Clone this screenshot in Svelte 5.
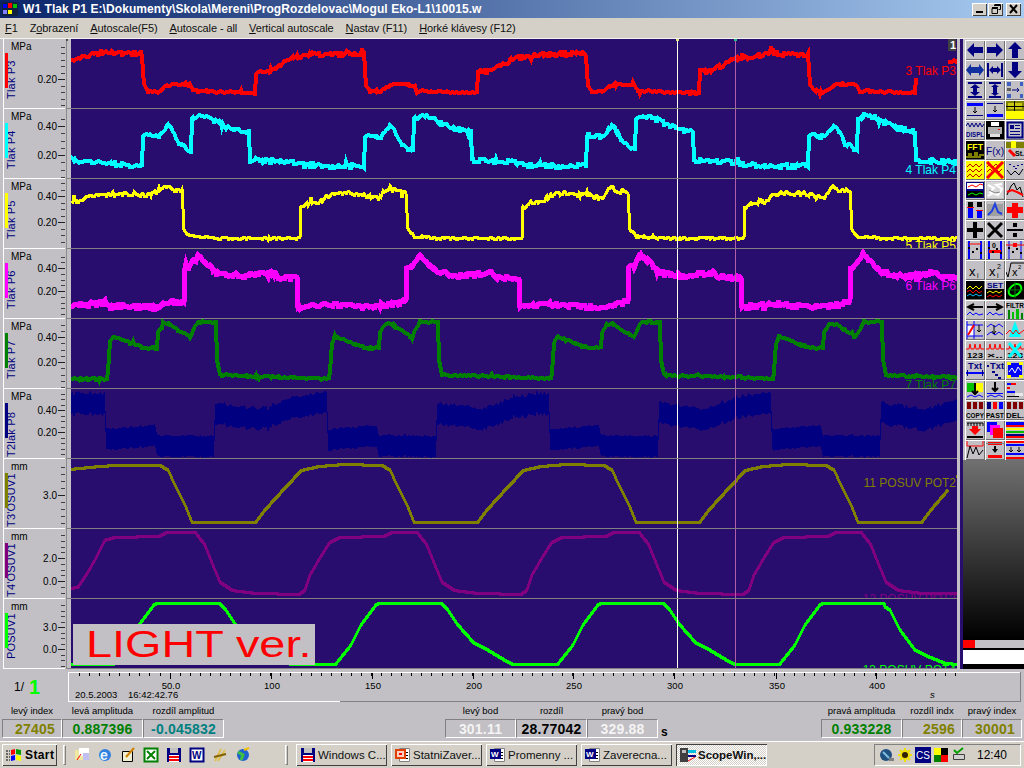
<script>
    // scope channels: anchors are absolute pixels of the plot, one cycle repeats every 222px
    const N = "#000080";
    const B = "#0000ff";
    const R = "#ff0000";
    const Y = "#ffff00";
    const K = "#000000";
    const G = "#008000";
    const O = "#808000";

    const channels = [
        { title: "Tlak P3", unit: "MPa", color: "#ff0000", width: 4, name: "3 Tlak P3", nameY: 71, top: 39,
          marks: [["0.20", 79]], step: 6.5,
          lead: [[71, 60], [100, 53], [142, 54], [144, 85], [148, 91], [158, 92], [165, 87], [172, 84], [190, 85], [194, 91], [254, 93]],
          t0: 255, cycles: 3, end: 916, noise: [2, 1], split: 76,
          cycle: [[0, 93], [1, 72], [15, 70], [38, 58], [70, 54], [109, 54], [111, 85], [115, 91], [125, 92], [132, 87], [139, 84], [157, 85], [161, 91], [221, 93]],
          tail: [[915, 93], [916, 78], [917, 78]], extra: "948,62 952,62 954,60 958,63" },
        { title: "Tlak P4", unit: "MPa", color: "#00ffff", width: 4, name: "4 Tlak P4", nameY: 170, top: 109,
          marks: [["0.40", 126], ["0.20", 155]], step: 7.25,
          lead: [[71, 160], [100, 163], [141, 166]],
          t0: 142, cycles: 4, end: 958, noise: [2, 2], split: 140,
          cycle: [[0, 166], [1, 135], [17, 137], [26, 125], [30, 130], [37, 143], [49, 151], [50, 120], [57, 115], [67, 118], [82, 125], [92, 129], [107, 131], [108, 160], [147, 162], [162, 165], [192, 166], [221, 166]] },
        { title: "Tlak P5", unit: "MPa", color: "#ffff00", width: 3, name: "5 Tlak P5", nameY: 246, top: 179,
          marks: [["0.40", 196], ["0.20", 222]], step: 6.5,
          lead: [[71, 203], [90, 197], [120, 193], [150, 195], [158, 190], [165, 187], [182, 191], [184, 230], [190, 236], [215, 238], [299, 238]],
          t0: 300, cycles: 3, end: 958, noise: [2, 1], split: 215,
          cycle: [[0, 238], [1, 207], [9, 203], [19, 202], [29, 195], [39, 193], [59, 193], [74, 197], [81, 198], [84, 192], [89, 187], [94, 190], [106, 192], [108, 230], [114, 236], [139, 238], [221, 238]] },
        { title: "Tlak P6", unit: "MPa", color: "#ff00ff", width: 5, name: "6 Tlak P6", nameY: 286, top: 249,
          marks: [["0.40", 268], ["0.20", 291]], step: 5.75,
          lead: [[71, 306], [105, 303], [110, 306], [160, 307], [165, 302], [183, 301]],
          t0: 184, cycles: 4, end: 958, noise: [2, 2], split: 999,
          cycle: [[0, 302], [1, 268], [6, 266], [13, 255], [21, 262], [31, 272], [56, 276], [86, 272], [91, 277], [113, 278], [114, 308], [116, 306], [150, 304], [190, 307], [215, 303], [221, 301]] },
        { title: "Tlak P7", unit: "MPa", color: "#008000", width: 4, name: "7 Tlak P7", nameY: 385, top: 319,
          marks: [["0.40", 337], ["0.20", 362]], step: 6.25,
          lead: [[71, 379], [107, 379]],
          t0: 108, cycles: 4, end: 958, noise: [1, 1], split: 999,
          cycle: [[0, 372], [2, 343], [5, 336], [27, 345], [37, 348], [49, 348], [50, 333], [55, 324], [62, 324], [72, 331], [82, 337], [87, 327], [90, 322], [108, 322], [109, 360], [112, 375], [132, 376], [182, 377], [221, 379]] },
        { title: "T2lak P8", unit: "MPa", color: "#000080", band: 11, name: "8 Tlak P8", nameY: 414, top: 389,
          marks: [["0.40", 410], ["0.20", 432]], step: 5.5,
          lead: [[71, 404], [105, 404], [106, 440], [155, 436], [157, 446], [213, 447]],
          t0: 214, cycles: 4, end: 958, noise: [2, 1], split: 430,
          cycle: [[0, 447], [1, 414], [46, 420], [78, 408], [106, 404], [113, 404], [114, 440], [163, 436], [165, 446], [221, 447]] },
        { title: "T3'OSUV1", unit: "mm", color: "#808000", width: 3, name: "11 POSUV POT2", nameY: 483, top: 459,
          marks: [["3.0", 495]], step: 7,
          lead: [[71, 469], [100, 466], [116, 465], [159, 465]],
          t0: 160, cycles: 4, end: 948, noise: [0, 0], split: 999,
          cycle: [[0, 465], [8, 470], [15, 485], [25, 505], [32, 522], [96, 522], [105, 510], [125, 488], [142, 470], [160, 466], [185, 464], [221, 465]],
          tail: [[948, 490]], extra: "956,476 958,476" },
        { title: "T4'OSUV1", unit: "mm", color: "#800080", width: 3, name: "12 POSUV POT3", nameY: 599, top: 529,
          marks: [["2.0", 558], ["0.0", 581]], step: 5.75,
          lead: [[71, 588], [78, 587], [85, 577], [95, 560], [105, 540], [115, 537], [160, 536], [167, 532], [194, 532]],
          t0: 195, cycles: 4, end: 958, noise: [0, 0], split: 999,
          cycle: [[0, 532], [10, 545], [20, 570], [25, 582], [37, 590], [60, 593], [105, 594], [110, 590], [115, 575], [125, 558], [135, 542], [145, 537], [190, 536], [197, 532], [221, 532]] },
        { title: "POSUV1", unit: "mm", color: "#00ff00", width: 3, name: "13 POSUV POT4", nameY: 670, top: 599,
          marks: [["3.0", 627], ["0.0", 649]], step: 5.5,
          lead: [[71, 664], [114, 664], [129, 645], [139, 625], [154, 605], [157, 603], [218, 603]],
          t0: 219, cycles: 3, end: 958, noise: [0, 0], split: 999,
          cycle: [[0, 603], [7, 610], [17, 625], [32, 642], [47, 650], [67, 662], [72, 664], [117, 664], [132, 645], [142, 625], [157, 605], [160, 603], [221, 603]],
          tail: [[880, 603], [890, 610], [900, 630], [915, 650], [930, 657], [945, 663], [958, 664]] }
    ];

    function random(seed) {
        return () => {
            seed = (seed + 0x6d2b79f5) | 0;
            let t = Math.imul(seed ^ (seed >>> 15), 1 | seed);
            t = (t + Math.imul(t ^ (t >>> 7), 61 | t)) ^ t;
            return ((t ^ (t >>> 14)) >>> 0) / 4294967296;
        };
    }

    function anchorsOf(ch) {
        let list = [...ch.lead];
        for (let k = 0; k < ch.cycles; k++) {
            const from = ch.t0 + k * 222;
            for (const [dx, y] of ch.cycle) {
                if (from + dx <= ch.end) list.push([from + dx, y]);
            }
        }
        if (ch.tail) list.push(...ch.tail);
        // hold the last level up to the end of the trace
        list.push([ch.end + 2, list[list.length - 1][1]]);
        return list;
    }

    function samples(ch, seed) {
        const rand = random(seed);
        const a = anchorsOf(ch);
        const out = [];
        let i = 0, jitter = 0;
        for (let x = 71; x <= ch.end; x++) {
            while (i < a.length - 2 && a[i + 1][0] < x) i++;
            const [x0, y0] = a[i];
            const [x1, y1] = a[i + 1];
            const y = y0 + ((y1 - y0) * (x - x0)) / Math.max(1, x1 - x0);
            const amp = y < ch.split ? ch.noise[0] : ch.noise[1];
            if (x % 2 === 0) jitter = (rand() - 0.5) * 2 * amp;
            const spike = rand() < 0.03 ? (rand() - 0.5) * 6 * amp : 0;
            out.push([x, Math.round(y + jitter + spike)]);
        }
        return out;
    }

    function tracePoints(ch, seed) {
        return samples(ch, seed).map(([x, y]) => x + "," + y).join(" ");
    }

    // thick navy channel is a filled band rather than a line
    function bandPoints(ch, seed) {
        const s = samples(ch, seed);
        const top = s.map(([x, y]) => x + "," + (y - ch.band));
        const low = s.reverse().map(([x, y]) => x + "," + (y + ch.band - 1));
        return top.concat(low).join(" ");
    }

    function ticks(ch) {
        const list = [];
        const first = ch.marks[0][1] - ch.top;
        for (let y = first - ch.step * 8; y < 70; y += ch.step) {
            if (y > 3 && y < 69) list.push(Math.round(y));
        }
        return list;
    }

    const rulerMinor = [];
    for (let x = 79; x < 958; x += 10.07) rulerMinor.push(Math.round(x));
    const rulerMajor = [
        ["50.0", 170], ["100", 271], ["150", 372], ["200", 473], ["250", 573], ["300", 674], ["350", 776], ["400", 876]
    ];

    const r = (x, y, w, h, f) => `<rect x="${x}" y="${y}" width="${w}" height="${h}" fill="${f}"/>`;
    const p = (d, f = N) => `<path d="${d}" fill="${f}"/>`;
    const s = (d, c = N, w = 1) => `<path d="${d}" fill="none" stroke="${c}" stroke-width="${w}"/>`;
    const t = (x, y, size, str, f = N, w = "bold", fit = 0) =>
        `<text x="${x}" y="${y}" font-size="${size}" fill="${f}" font-weight="${w}"${fit ? ` textLength="${fit}" lengthAdjust="spacingAndGlyphs"` : ""}>${str}</text>`;
    const zig = "M1 8 4 5 7 8 10 5 13 8 16 5";
    const dots = r(2, 6, 2, 2, K) + r(6, 10, 2, 2, K) + r(10, 7, 2, 2, K) + r(14, 11, 2, 2, K);
    const digits = t(1, 17, 8, "123", K, "bold", 16);
    const peaks = s("M0 8H3L4 3 5 8H8L9 3 10 8H13L14 3 15 8H18", R);

    const tools = [
        p("M1 9 8 2V6H17V12H8V16Z"), p("M17 9 10 2V6H1V12H10V16Z"), p("M9 1 16 8H12V17H6V8H2Z"),
        p("M0 9 5 3V6H13V3L18 9 13 15V12H5V15Z", "#1030a0"), r(1, 2, 2, 14, N) + r(15, 2, 2, 14, N) + p("M3 9 7 5V7H11V5L15 9 11 13V11H7V13Z"), p("M9 17 16 10H12V1H6V10H2Z"),
        r(2, 1, 14, 2, N) + r(2, 15, 14, 2, N) + p("M9 3 14 7H11V11H14L9 15 4 11H7V7H4Z"), r(3, 1, 12, 2, N) + r(3, 15, 12, 2, N) + p("M9 3 13 6H11V12H13L9 15 5 12H7V6H5Z"), r(1, 1, 4, 4, "#4060c0") + r(1, 7, 4, 3, "#606060") + r(1, 13, 4, 4, "#4060c0") + r(14, 1, 3, 4, "#4060c0") + r(14, 13, 3, 4, "#4060c0") + s("M6 9H13M11 7 13 9 11 11", N, 1),
        r(1, 2, 16, 3, B) + r(1, 14, 16, 1, N) + s("M9 6V12M7 10 9 12 11 10", K), r(1, 2, 16, 1, N) + r(1, 13, 16, 3, B) + s("M9 5V11M7 9 9 11 11 9", K), r(0, 0, 18, 10, O) + r(2, 2, 14, 6, "#c8c810") + r(8, 0, 1, 10, K) + r(0, 5, 18, 1, K) + r(0, 10, 18, 8, Y),
        s("M0 5 2 2 4 6 6 2 8 6 10 2 12 6 14 2 16 6 18 3") + t(0, 16, 7.5, "DISPL", N, "bold", 18), r(0, 0, 18, 18, K) + p("M5 1H13V5H5Z", "#fff") + r(2, 6, 14, 7, "#b0b0b0") + r(4, 13, 10, 3, "#e0e0e0") + r(12, 8, 2, 1, R), s("M1.5 1.5H16.5V16.5H1.5Z", N, 2) + r(4, 4, 4, 4, N) + r(9, 4, 5, 1, N) + r(9, 7, 5, 1, N) + r(4, 10, 10, 1, N) + r(4, 13, 10, 1, N),
        r(0, 0, 18, 18, K) + t(1, 9, 9, "FFT", Y, "bold", 16) + s("M0 16H3V13H5V16H9V12H11V16H14V14H18", O, 2), t(0, 14, 11, "F(x)", N, "normal", 18), r(0, 1, 18, 6, O) + r(5, 0, 5, 7, Y) + s("M3 9 9 15", R, 3) + t(9, 15, 7, "St.", K),
        r(0, 0, 18, 18, Y) + s("M1 6 4 3 7 6 10 3 13 6 16 3", "#c00000") + s("M1 11 4 8 7 11 10 8 13 11 16 8", "#c00000") + s("M1 16 4 13 7 16 10 13 13 16 16 13", "#c00000"), r(0, 0, 18, 18, Y) + s("M1 6 4 3 7 6 10 3 13 6 16 3", "#c00000") + s("M1 11 4 8 7 11 10 8 13 11 16 8", "#c00000") + s("M1 1 17 17M17 1 1 17", R, 3), s("M1 9 5 14 9 10 13 14 17 8", K) + r(3, 3, 2, 1, N) + r(7, 5, 2, 1, N) + r(11, 4, 2, 1, N) + r(15, 3, 2, 1, N) + r(9, 7, 2, 1, N),
        r(0, 1, 18, 16, N) + r(1, 2, 16, 6, "#fff") + r(1, 10, 16, 6, K) + s("M2 6 6 4 10 6 14 3 17 4", R) + s("M2 14 6 12 10 14 14 12 17 13", "#00ff00"), r(1, 1, 16, 16, "#d8d8d8") + s("M2 4 8 7 4 11 12 14 16 8 10 4 16 3M2 15 7 12", "#ffffff", 2) + s("M3 9 9 12 14 11", "#808080"), s("M1 14 5 5 8 2 11 9 14 6 17 16", K) + s("M1 11 6 9 11 11 17 14", R, 2),
        r(2, 1, 5, 5, K) + r(11, 1, 5, 5, K) + r(2, 6, 5, 11, B) + r(11, 9, 5, 8, B) + r(1, 6, 7, 1, R) + r(10, 9, 7, 1, R), r(1, 3, 16, 12, "#a0a0a0") + s("M2 14 6 10 9 3 12 11 16 13", "#2040e0", 2), p("M6 2H12V6H17V12H12V17H6V12H1V6H6Z", R),
        p("M7 1H11V7H17V11H11V17H7V11H1V7H7Z", K), s("M2 2 16 16M16 2 2 16", K, 3), r(1, 8, 16, 2, K) + r(7, 2, 4, 4, K) + r(7, 12, 4, 4, K),

        s("M3 0V18M15 0V18", B, 2) + s("M3 3H15", R) + dots, s("M3 0V18M15 0V18", B, 2) + t(6, 7, 7, "0", K) + r(3, 9, 12, 3, R) + dots, s("M3 0V18M15 0V18", B) + s("M0 4H18", R) + r(7, 2, 4, 4, R) + dots,
        t(3, 15, 13, "x", K, "normal") + t(11, 17, 7, "i", K, "normal"), t(3, 15, 13, "x", K, "normal") + t(11, 8, 7, "2", K, "normal") + t(11, 17, 7, "i", K, "normal"), s("M0 11 2 16 5 2H18", K) + t(6, 15, 11, "x", K, "normal") + t(12, 8, 6, "2", K, "normal"),
        r(0, 0, 18, 18, K) + s(zig, Y) + s("M1 11 4 9 7 12 10 9 13 12 16 10", R) + s("M1 15 4 13 7 15 10 13 13 15 16 14", "#00c0ff"), t(1, 7, 8, "SET", N, "bold", 16) + r(0, 8, 18, 10, K) + s("M1 12 4 10 7 12 10 10 13 12 16 10", Y) + s("M1 16 4 14 7 16 10 14 13 16 16 14", R), r(0, 0, 18, 18, K) + `<ellipse cx="9" cy="9" rx="7" ry="5" transform="rotate(-40 9 9)" fill="none" stroke="#00ff00" stroke-width="2"/>` + s("M9 1V17M1 9H17", "#008000"),
        s("M8 3 2 6 8 9M2 6H17", K, 2) + s("M1 14 4 11 7 14 10 12 13 14 17 13", B), s("M10 3 16 6 10 9M1 6H16", K, 2) + s("M1 14 4 11 7 14 10 12 13 14 17 13", B), t(0, 7, 7, "FILTR", K, "bold", 18) + r(2, 9, 2, 9, G) + r(6, 11, 2, 7, "#00c000") + r(10, 8, 3, 10, "#00c000") + r(15, 12, 2, 6, G),
        r(1, 4, 7, 11, "#fff") + s("M1 0V18M1 4H17M8 0V18M1 15H17", B) + s("M2 14 8 4", R, 2) + s("M13 4V11M11 9 13 11 15 9", K), s("M1 6 5 3 9 6 13 3 17 6", B) + s("M1 14 5 11 9 14 13 11 17 14", B) + s("M8 4V13M6 10 8 13 10 10", K), p("M9 0 3 16H15Z", "#00ffff") + s("M0 13 4 9 7 13 10 9 13 13 18 9", R),
        peaks + digits, peaks + t(1, 17, 8, "×..", K, "bold", 16), peaks + digits + s("M3 2 15 16M15 2 3 16", "#00ffff", 3),
        t(2, 8, 8.5, "Txt", N, "bold", 14) + r(0, 11, 18, 2, B) + r(1, 9, 1, 6, N) + r(16, 9, 1, 6, N), t(4, 8, 8.5, "Txt", N, "bold", 14) + r(1, 4, 2, 2, N) + r(6, 10, 3, 2, N) + r(9, 13, 3, 2, N) + r(12, 16, 3, 2, N), r(2, 2, 14, 14, B) + r(1, 1, 4, 3, Y) + r(13, 1, 4, 3, Y) + r(1, 14, 4, 3, Y) + r(13, 14, 4, 3, Y) + s("M3 11 6 7 9 12 12 6 15 10", "#fff"),
        r(1, 2, 8, 9, "#00c000") + r(9, 2, 8, 9, Y) + s("M9 2V13M6 10 9 13 12 10", K, 2) + s("M1 16 5 14 9 16 13 14 17 16", B), s("M9 1V10M6 7 9 10 12 7", K, 2) + r(1, 12, 16, 1, B) + s("M1 16 5 14 9 16 13 14 17 16", B), r(1, 2, 4, 2, B) + r(5, 2, 5, 2, R) + r(1, 6, 3, 2, R) + r(1, 10, 8, 2, B) + r(1, 15, 12, 1, K) + r(9, 12, 8, 3, "#e8e8e8"),
        r(1, 1, 4, 7, "#800000") + r(7, 1, 4, 7, "#800000") + r(13, 1, 4, 7, "#800000") + t(0, 17, 7.5, "COPY", K, "bold", 18), r(1, 1, 4, 7, N) + r(7, 1, 4, 7, R) + r(13, 1, 4, 7, B) + t(0, 17, 7.5, "PAST", K, "bold", 18), r(1, 1, 4, 7, "#800000") + r(7, 1, 4, 7, "#800000") + r(13, 1, 4, 7, "#800000") + t(0, 17, 7.5, "DEL.", K, "bold", 18),
        s("M1 2H17M2 2V5M5 2V5M8 2V5M11 2V5M14 2V5M17 2V5", K) + p("M9 14 3 8H6V5H12V8H15Z", R) + s("M1 16H17", K, 2), r(1, 1, 10, 10, B) + r(4, 4, 10, 10, "#ff00ff") + r(7, 7, 10, 10, R), r(0, 1, 18, 3, B) + r(0, 4, 18, 2, R) + r(0, 7, 18, 2, Y) + r(0, 10, 18, 2, "#00c000") + r(0, 13, 18, 2, N) + r(0, 15, 18, 2, R),
        s("M1 0V5H17V0", R) + s("M1 17 4 5 7 13 10 6 13 14 17 9", K), r(2, 1, 14, 3, R) + r(0, 2, 18, 1, "#808080") + r(2, 14, 14, 3, R) + p("M9 12 6 8H12Z", K) + r(8, 5, 2, 3, K), r(0, 0, 18, 2, R) + r(0, 16, 18, 2, R) + r(0, 3, 18, 2, B) + r(0, 12, 18, 2, B) + s("M5 6V11M3 9 5 11 7 9M13 6V11M11 9 13 11 15 9", K, 1)
    ];

    const menu = [
        ["", "F", "1"], ["Z", "o", "brazení"], ["", "A", "utoscale(F5)"], ["", "A", "utoscale - all"],
        ["", "V", "ertical autoscale"], ["", "N", "astav (F11)"], ["", "H", "orké klávesy (F12)"]
    ];

    const leftStats = [
        { label: "levý index", value: "27405", tone: "olive", size: "narrow", end: true },
        { label: "levá amplituda", value: "0.887396", tone: "green", size: "wide" },
        { label: "rozdíl amplitud", value: "-0.045832", tone: "teal", size: "wide" }
    ];
    const midStats = [
        { label: "levý bod", value: "301.11", tone: "pale", size: "mid" },
        { label: "rozdíl", value: "28.77042", tone: "ink", size: "mid" },
        { label: "pravý bod", value: "329.88", tone: "pale", size: "mid" }
    ];
    const rightStats = [
        { label: "pravá amplituda", value: "0.933228", tone: "green", size: "wide" },
        { label: "rozdíl indx", value: "2596", tone: "olive", size: "narrow", end: true },
        { label: "pravý index", value: "30001", tone: "olive", size: "narrow", end: true }
    ];
    const statGroups = [
        { cls: "g-left", items: leftStats },
        { cls: "g-mid", items: midStats, suffix: "s" },
        { cls: "g-right", items: rightStats }
    ];

    const quick = [
        r(1, 3, 11, 10, "#f0e8a0") + r(5, 1, 10, 8, "#fff") + r(9, 6, 6, 7, "#c0c0f0") + s("M3 13 7 7", R),
        `<circle cx="8" cy="8" r="6" fill="#3080e0"/>` + t(3, 13, 14, "e", "#e8f4ff"),
        r(2, 4, 11, 11, "#f0f0d0") + s("M2.5 4.5H12.5V14.5H2.5Z", K) + s("M6 10 14 1", "#d08000", 2),
        r(1, 1, 14, 14, "#fff") + s("M1.5 1.5H14.5V14.5H1.5Z", G, 2) + s("M4 4 12 12M12 4 4 12", G, 2),
        r(1, 1, 14, 14, "#000080") + r(4, 1, 8, 5, "#c0c0c0") + r(3, 8, 10, 7, "#fff") + r(3, 9, 10, 2, R) + r(3, 12, 10, 2, R),
        r(1, 1, 14, 14, "#fff") + s("M1.5 1.5H14.5V14.5H1.5Z", N, 2) + t(3, 12, 10, "W", N),
        s("M3 14 9 2M6 14 13 3", "#e0c050", 2) + s("M2 10 14 7", "#806000", 2),
        `<circle cx="8" cy="8" r="6" fill="#2060d0"/>` + s("M3 5 8 8 6 13", "#40c040", 3) + s("M9 3 14 1", "#f0c000", 2)
    ];
    const floppy = r(1, 1, 14, 14, "#000080") + r(4, 1, 8, 5, "#c0c0c0") + r(3, 8, 10, 7, "#fff") + r(3, 9, 10, 2, R) + r(3, 12, 10, 2, R);
    const sheet = r(4, 1, 11, 14, "#fff") + s("M4.5 1.5H14.5V14.5H4.5Z", "#808080") + r(6, 5, 7, 1, K) + r(6, 8, 7, 1, K) + r(6, 11, 7, 1, K);
    const tasks = [
        { icon: floppy, text: "Windows C..." },
        { icon: sheet + r(0, 2, 11, 10, "#e04000") + r(2, 4, 7, 6, "#ffd0c0") + r(4, 6, 3, 2, R), text: "StatniZaver..." },
        { icon: sheet + r(0, 2, 11, 10, "#000080") + t(1, 10, 8, "W", "#fff"), text: "Promenny ..." },
        { icon: sheet + r(0, 2, 11, 10, "#000080") + t(1, 10, 8, "W", "#fff"), text: "Zaverecna..." },
        { icon: r(0, 1, 8, 14, "#404040") + r(2, 3, 4, 3, "#c0c0c0") + r(8, 3, 8, 3, "#00c0e0") + r(8, 8, 8, 2, N) + s("M8 14 15 10", R), text: "ScopeWin,...", active: true }
    ];
    const tray = [
        `<circle cx="7" cy="8" r="6" fill="#205080"/>` + s("M4 5 10 11", "#80c0e0", 2) + r(10, 11, 5, 3, "#808080"),
        `<circle cx="8" cy="8" r="5" fill="#f0e000"/>` + s("M8 1V15M1 8H15M3 3 13 13M13 3 3 13", "#f0e000", 2) + `<circle cx="8" cy="8" r="3" fill="#302000"/>` ,
        r(0, 0, 16, 16, "#000080") + t(1, 12, 10, "CS", "#fff", "normal"),
        r(1, 1, 7, 7, Y) + r(8, 1, 7, 7, K) + r(1, 8, 7, 7, "#008000") + r(8, 8, 7, 7, R),
        r(2, 7, 12, 6, "#d0d0d0") + s("M2.5 7.5H13.5V12.5H2.5Z", "#404040") + s("M3 3 6 6 12 1", "#00a000", 2)
    ];
</script>

<div class="app">
    <header class="titlebar">
        <svg class="appicon" width="16" height="14" viewBox="0 0 16 14">
            <rect width="16" height="14" fill="#102040" />
            <rect x="1" y="2" width="4" height="4" fill="#0000ff" />
            <rect x="6" y="1" width="4" height="5" fill="#ff0000" />
            <rect x="11" y="2" width="4" height="4" fill="#00c000" />
            <rect x="6" y="8" width="4" height="4" fill="#ffff00" />
            <rect x="1" y="8" width="4" height="4" fill="#8080ff" />
        </svg>
        <span class="caption">W1 Tlak P1 E:\Dokumenty\Skola\Mereni\ProgRozdelovac\Mogul Eko-L1\10015.w</span>
        <div class="winbtns">
            <button class="winbtn" aria-label="min"><svg width="14" height="12" viewBox="0 0 14 12"><rect x="3" y="8" width="7" height="2" fill="#000" /></svg></button>
            <button class="winbtn" aria-label="restore"><svg width="14" height="12" viewBox="0 0 14 12"><path d="M5.5 1.5H11.5V6.5H9.5M3 5.5H8.5V10.5H3Z M5 2.5H11M3 4.5H9" fill="none" stroke="#000" /></svg></button>
            <button class="winbtn close" aria-label="close"><svg width="14" height="12" viewBox="0 0 14 12"><path d="M3 2 10 10M10 2 3 10" fill="none" stroke="#000" stroke-width="2" /></svg></button>
        </div>
    </header>

    <nav class="menubar">
        {#each menu as [a, u, b]}
            <span class="menuitem">{a}<u>{u}</u>{b}</span>
        {/each}
    </nav>

    <main class="workspace">
        <section class="channels">
            {#each channels as ch, i}
                <div class="channel">
                    <svg class="side" width="71" height="70" viewBox="0 0 71 70">
                        <text class="title" transform="translate(15 {ch.title.length > 7 ? 68 : 60}) rotate(-90)">{ch.title}</text>
                        <rect x="0" y="0" width="11" height="14" fill="#c2c0c4" />
                        <rect x="3" y="0" width="1" height="70" fill="#ffffff" />
                        <rect x="5" y="14" width="3" height="35" fill={ch.color} />
                        <text class="unit" x="11" y="11">{ch.unit}</text>
                        {#each ticks(ch) as y}
                            <rect x="61" {y} width="4" height="1" fill="#404040" />
                        {/each}
                        {#each ch.marks as [label, y]}
                            <text class="mark" x="57" y={y - ch.top + 4}>{label}</text>
                            <rect x="58" y={y - ch.top} width="7" height="1" fill="#202020" />
                        {/each}
                        <rect x="3" y="69" width="62" height="1" fill="#ffffff" />
                        <rect x="66" y="0" width="1" height="70" fill="#8a8a8a" />
                        <rect x="67" y="69" width="4" height="1" fill="#808080" />
                        {#if i === 0}
                            <rect x="66" y="0" width="2" height="2" fill="#505050" />
                        {/if}
                    </svg>
                    <svg class="plot" width="886" height="69" viewBox="71 {ch.top} 886 69">
                        {#if ch.band}
                            <polygon points={bandPoints(ch, i + 11)} fill={ch.color} />
                        {:else}
                            <polyline points={tracePoints(ch, i + 11)} fill="none" stroke={ch.color} stroke-width={ch.width} />
                        {/if}
                        {#if ch.extra}
                            <polyline points={ch.extra} fill="none" stroke={ch.color} stroke-width={ch.width} />
                        {/if}
                        <rect x="677" y={ch.top} width="1" height="69" fill="#fffff0" />
                        <rect x="735" y={ch.top} width="1" height="69" fill="#b060a8" />
                        {#if i === 0}
                            <rect x="676" y="39" width="3" height="2" fill="#e0e080" />
                            <rect x="734" y="39" width="3" height="2" fill="#20c080" />
                            <rect x="948" y="39" width="8" height="12" fill="#404040" />
                            <text class="badge" x="950" y="49">1</text>
                        {/if}
                        <text class="name" x="956" y={ch.nameY + 4} fill={ch.color}>{ch.name}</text>
                    </svg>
                    <div class="edge"></div>
                </div>
            {/each}
            <div class="light"><span>LIGHT ver.</span></div>
        </section>

        <aside class="toolbar">
            <div class="tools">
                {#each tools as icon}
                    <button class="tool" aria-label="tool">
                        <svg width="18" height="18" viewBox="0 0 18 18">{@html icon}</svg>
                    </button>
                {/each}
            </div>
            <div class="fade"></div>
            <div class="level"><div class="levelfill"></div></div>
            <div class="meter"></div>
        </aside>
    </main>

    <section class="axisrow">
        <div class="pager"><span>1/</span><b>1</b></div>
        <svg class="ruler" width="953" height="30" viewBox="68 672 953 30">
            <rect x="68" y="672" width="953" height="1" fill="#ffffff" />
            <rect x="68" y="672" width="1" height="30" fill="#ffffff" />
            <rect x="68" y="701" width="272" height="1" fill="#ffffff" />
            <rect x="340" y="701" width="681" height="1" fill="#808080" />
            <rect x="1020" y="672" width="1" height="30" fill="#808080" />
            {#each rulerMinor as x}
                <rect {x} y="673" width="1" height="3" fill="#000" />
            {/each}
            {#each rulerMajor as [label, x]}
                <rect {x} y="673" width="1" height="6" fill="#000" />
                <text x={x + 1} y="689" text-anchor="middle">{label}</text>
            {/each}
            <text x="75" y="698">20.5.2003</text>
            <text x="128" y="698">16:42:42.76</text>
            <text x="930" y="698" font-style="italic">s</text>
        </svg>
    </section>

    <section class="stats">
        {#each statGroups as group}
            <div class="group {group.cls}">
                {#each group.items as item}
                    <div class="stat {item.size}">
                        <span class="statlabel">{item.label}</span>
                        <output class="box {item.tone}" class:end={item.end}>{item.value}</output>
                    </div>
                {/each}
                {#if group.suffix}<span class="suffix">{group.suffix}</span>{/if}
            </div>
        {/each}
    </section>

    <footer class="taskbar">
        <button class="start">
            <svg width="18" height="15" viewBox="0 0 18 15">
                <path d="M6 2 10 1V6L6 7Z" fill="#ff0000" />
                <path d="M11 1 16 2V7L11 6Z" fill="#00a000" />
                <path d="M6 8 10 7V12L6 13Z" fill="#0000ff" />
                <path d="M11 7 16 8V13L11 12Z" fill="#ffff00" />
                <path d="M1 3H5M1 6H5M1 9H5M1 12H5" stroke="#000" stroke-width="1" stroke-dasharray="2 1" />
            </svg>
            Start
        </button>
        <span class="handle first"></span>
        <div class="quick">
            {#each quick as icon}
                <svg width="16" height="16" viewBox="0 0 16 16">{@html icon}</svg>
            {/each}
        </div>
        <span class="handle second"></span>
        <div class="tasks">
            {#each tasks as task}
                <button class="task" class:active={task.active}>
                    <svg width="16" height="16" viewBox="0 0 16 16">{@html task.icon}</svg>
                    <span>{task.text}</span>
                </button>
            {/each}
        </div>
        <div class="tray">
            {#each tray as icon}
                <svg width="16" height="16" viewBox="0 0 16 16">{@html icon}</svg>
            {/each}
            <span class="clock">12:40</span>
        </div>
    </footer>
</div>

<style>
    :global(body) {
        margin: 0;
        background: #c2c0c4;
    }

    .app {
        width: 1024px;
        height: 768px;
        overflow: hidden;
        background: #c2c0c4;
        font-family: "Liberation Sans", Arial, sans-serif;
        color: #000;
    }

    button {
        font-family: inherit;
        padding: 0;
    }

    .titlebar {
        height: 18px;
        display: flex;
        align-items: center;
        background: linear-gradient(90deg, #0a246a, #a6caf0);
        box-sizing: border-box;
        padding-left: 2px;
    }

    .caption {
        margin-left: 5px;
        color: #fff;
        font-weight: bold;
        font-size: 12px;
        white-space: nowrap;
        letter-spacing: 0.07px;
    }

    .winbtns {
        display: flex;
        margin-left: auto;
        padding-right: 3px;
        gap: 1px;
    }

    .winbtn {
        width: 15px;
        height: 13px;
        background: #d4d0c8;
        border: none;
        box-shadow: inset 1px 1px 0 #fff, inset -1px -1px 0 #404040;
        display: flex;
        align-items: center;
        justify-content: center;
    }

    .close {
        margin-left: 2px;
    }

    .menubar {
        height: 20px;
        display: flex;
        align-items: center;
        background: #d4d0c8;
        border-bottom: 1px solid #f4f2ee;
        padding-left: 5px;
        font-size: 11px;
        letter-spacing: -0.1px;
        color: #101010;
    }

    .menuitem {
        white-space: nowrap;
        margin-right: 12px;
    }

    .workspace {
        display: flex;
        height: 630px;
    }

    .channels {
        position: relative;
        width: 960px;
    }

    .channel {
        display: flex;
        height: 70px;
    }

    .side {
        display: block;
        flex: none;
    }

    .plot {
        display: block;
        flex: none;
        background: #280c6e;
        border-bottom: 1px solid #808080;
    }

    .plot polyline,
    .plot polygon {
        shape-rendering: crispEdges;
    }

    .edge {
        width: 3px;
        background: #c2c0c4;
    }

    .title {
        font-size: 11px;
        fill: #000080;
        letter-spacing: 0.2px;
    }

    .unit,
    .mark {
        font-size: 10px;
        fill: #000;
    }

    .mark {
        text-anchor: end;
    }

    .name {
        font-size: 12px;
        text-anchor: end;
    }

    .badge {
        font-size: 11px;
        font-weight: bold;
        fill: #fff;
    }

    .light {
        position: absolute;
        left: 73px;
        top: 585px;
        width: 242px;
        height: 41px;
        background: #c2c0c4;
        overflow: hidden;
    }

    .light span {
        display: block;
        margin: 0 0 0 13px;
        color: #ff0000;
        font-size: 36px;
        line-height: 42px;
        white-space: nowrap;
        transform: scaleX(1.3);
        transform-origin: left center;
    }

    .toolbar {
        width: 64px;
        box-sizing: border-box;
        border-left: 3px solid #280c6e;
        display: flex;
        flex-direction: column;
        background: #c2c0c4;
    }

    .tools {
        display: grid;
        grid-template-columns: repeat(3, 20px);
        grid-auto-rows: 20px;
        padding: 1px 0 0 2px;
        height: 420px;
        flex: none;
        background: #c2c0c4;
        box-sizing: content-box;
    }

    .tool {
        width: 20px;
        height: 20px;
        border: none;
        background: #c2c0c4;
        box-shadow: inset 1px 1px 0 #fff, inset -1px -1px 0 #707070;
        display: flex;
        align-items: center;
        justify-content: center;
    }

    .tool svg {
        font-family: "Liberation Sans", sans-serif;
    }

    .fade {
        flex: 1;
        background: linear-gradient(#707070, #000);
    }

    .level {
        height: 8px;
        flex: none;
        background: #c2c0c4;
    }

    .levelfill {
        width: 12px;
        height: 8px;
        background: #ff0000;
    }

    .meter {
        height: 14px;
        flex: none;
        margin-top: 2px;
        margin-bottom: 5px;
        background: #fff;
        box-shadow: 0 -2px 0 #000, 0 5px 0 #000;
    }

    .axisrow {
        display: flex;
        height: 33px;
        padding-top: 3px;
        box-sizing: border-box;
    }

    .pager {
        width: 68px;
        flex: none;
        display: flex;
        align-items: center;
        padding-left: 14px;
        box-sizing: border-box;
        gap: 5px;
        font-size: 12px;
    }

    .pager b {
        color: #00ff00;
        font-size: 20px;
        font-weight: bold;
    }

    .ruler {
        display: block;
        font-size: 9.5px;
    }

    .stats {
        display: flex;
        height: 39px;
    }

    .group {
        display: flex;
        position: relative;
    }

    .g-left {
        margin-left: 2px;
    }

    .g-mid {
        margin-left: 221px;
    }

    .g-right {
        margin-left: auto;
        margin-right: 2px;
    }

    .stat {
        display: flex;
        flex-direction: column;
    }

    .narrow {
        width: 60px;
    }

    .wide {
        width: 81px;
    }

    .mid {
        width: 71px;
    }

    .statlabel {
        height: 17px;
        line-height: 17px;
        font-size: 9.5px;
        text-align: center;
        white-space: nowrap;
    }

    .box {
        display: block;
        height: 19px;
        line-height: 18px;
        box-sizing: border-box;
        border: 1px solid;
        border-color: #808080 #fff #fff #808080;
        font-size: 14px;
        font-weight: bold;
        text-align: center;
        letter-spacing: 0.2px;
    }

    .end {
        text-align: right;
        padding-right: 6px;
    }

    .olive { color: #808000; }
    .green { color: #008000; }
    .teal { color: #008080; }
    .pale { color: #f4f4f4; }
    .ink { color: #000; }

    .suffix {
        align-self: flex-end;
        font-size: 12px;
        font-weight: bold;
        margin: 0 0 2px 3px;
        width: 10px;
    }

    .taskbar {
        height: 27px;
        box-sizing: border-box;
        background: #d4d0c8;
        border-top: 1px solid #fff;
        display: flex;
        align-items: center;
        padding: 0 3px 0 2px;
    }

    .start {
        width: 55px;
        height: 22px;
        background: #d4d0c8;
        border: none;
        box-shadow: inset 1px 1px 0 #fff, inset -1px -1px 0 #404040;
        font-size: 12px;
        font-weight: bold;
        display: flex;
        align-items: center;
        gap: 2px;
        padding-left: 3px;
        letter-spacing: 0.4px;
    }

    .handle {
        height: 20px;
        flex: none;
        border: 1px solid;
        border-color: #fff #808080 #808080 #fff;
        box-sizing: border-box;
        width: 3px;
    }

    .first {
        margin-left: 6px;
    }

    .second {
        margin-left: 34px;
    }

    .quick {
        display: flex;
        gap: 7px;
        margin-left: 8px;
    }

    .tasks {
        display: flex;
        gap: 4px;
        margin-left: 8px;
    }

    .task {
        width: 91px;
        height: 22px;
        background: #d4d0c8;
        border: none;
        box-shadow: inset 1px 1px 0 #fff, inset -1px -1px 0 #404040;
        display: flex;
        align-items: center;
        gap: 2px;
        padding-left: 4px;
        font-size: 11.5px;
        white-space: nowrap;
        color: #101010;
    }

    .task.active {
        font-weight: bold;
        box-shadow: inset 1px 1px 0 #404040, inset -1px -1px 0 #fff;
        background: repeating-conic-gradient(#fff 0 25%, #d4d0c8 0 50%) 0 0 / 2px 2px;
    }

    .tray {
        margin-left: auto;
        width: 147px;
        height: 22px;
        box-sizing: border-box;
        display: flex;
        align-items: center;
        gap: 2px;
        padding-left: 4px;
        border: 1px solid;
        border-color: #808080 #fff #fff #808080;
    }

    .clock {
        margin-left: auto;
        margin-right: 13px;
        font-size: 12px;
    }
</style>
